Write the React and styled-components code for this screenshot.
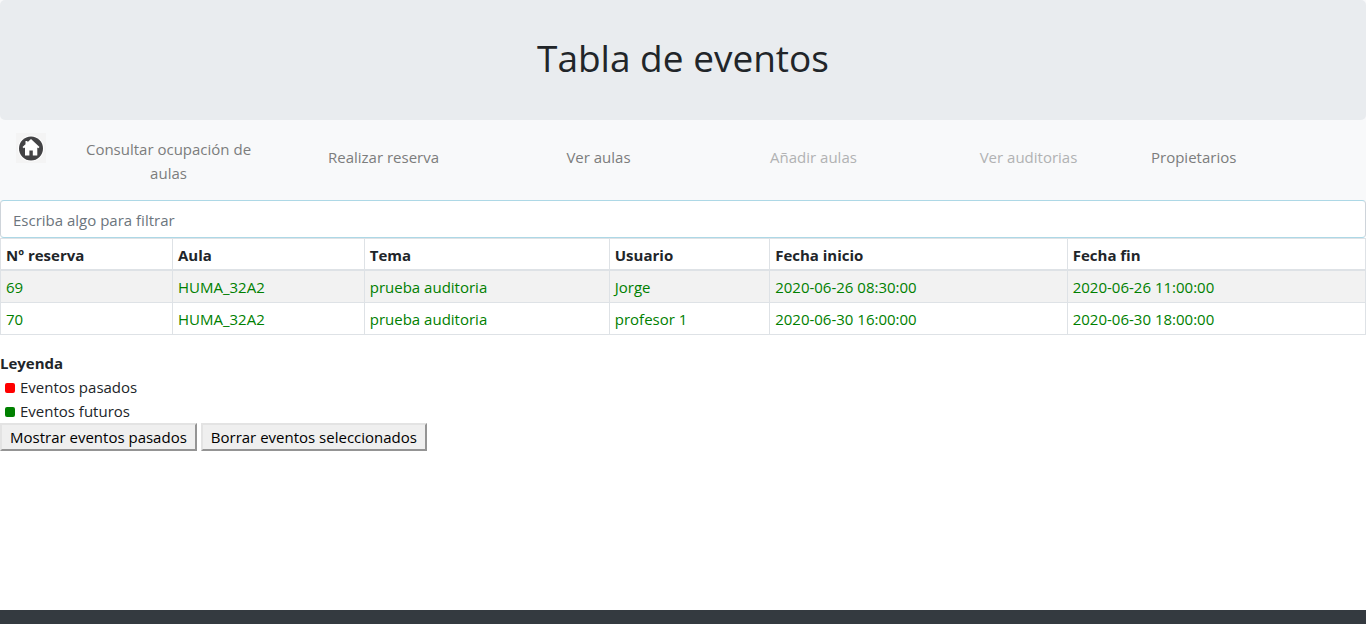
import React, { useState } from "react";
import styled, { createGlobalStyle } from "styled-components";

const GlobalStyle = createGlobalStyle`
  *, *::before, *::after { box-sizing: border-box; }
  body {
    margin: 0;
    background: #fff;
    color: #212529;
    font-family: "Segoe UI", "Open Sans", "Noto Sans", sans-serif;
    font-size: 15px;
    line-height: 24px;
  }
`;

const Page = styled.div`
  min-height: 100vh;
  display: flex;
  flex-direction: column;
`;

const Banner = styled.header`
  padding: 32px 16px;
  border-radius: 5px;
  background: #e9ecef;
  text-align: center;
`;

const BannerBackdrop = styled.div`
  background: #f8f9fa;
`;

const Title = styled.h1`
  margin: 0;
  padding-bottom: 4px;
  font-size: 37px;
  font-weight: 400;
  line-height: 52px;
`;

const Nav = styled.nav`
  display: flex;
  gap: 15px;
  min-height: 80px;
  padding: 13px 15px 13px 16px;
  background: #f8f9fa;
`;

const HomeLink = styled.a`
  flex: none;
  width: 30px;
  height: 30px;

  svg { display: block; }
`;

const Menu = styled.ul`
  flex: 1;
  display: grid;
  grid-template-columns: repeat(6, 1fr);
  align-items: start;
  margin: 0;
  padding: 4px 0 0;
  list-style: none;
`;

const MenuItem = styled.li`
  padding: ${(p) => (p.$tall ? 0 : 8)}px ${(p) => (p.$start ? 15 : 20)}px 0;
  text-align: ${(p) => (p.$start ? "left" : "center")};
`;

const MenuLink = styled.a`
  color: ${(p) => (p.$muted ? "#b1b2b3" : "#7c7d7d")};
  text-decoration: none;
`;

const Filter = styled.input`
  display: block;
  width: 100%;
  height: 38px;
  padding: 7px 12px 5px;
  border: 1px solid #ced4da;
  border-top-color: #add8e6;
  border-bottom-color: #add8e6;
  border-radius: 4px;
  background: #fff;
  color: #495057;
  font: inherit;

  &::placeholder { color: #6c757d; opacity: 1; }
`;

const FilterArea = styled.div`
  background: linear-gradient(#f8f9fa 50%, #fff 50%);
`;

const Table = styled.table`
  width: 100%;
  margin-bottom: 16px;
  border-collapse: collapse;
  table-layout: fixed;
`;

const HeadCell = styled.th`
  width: ${(p) => p.$width};
  padding: 4px 5px 2px;
  border: 1px solid #dee2e6;
  border-bottom-width: 2px;
  text-align: left;
  font-weight: 700;
`;

const Row = styled.tr`
  color: #008000;

  &:nth-child(odd) { background: #f2f2f2; }
`;

const Cell = styled.td`
  height: 32px;
  padding: 4px 5px 2px;
  border: 1px solid #dee2e6;
`;

const LegendTitle = styled.h2`
  margin: 0;
  font-size: 15px;
  font-weight: 700;
  line-height: 24px;
`;

const Legend = styled.ul`
  margin: 0;
  padding: 0 5px;
  list-style: none;
`;

const LegendItem = styled.li`
  display: flex;
  align-items: center;
  gap: 5px;

  &::before {
    content: "";
    width: 10px;
    height: 10px;
    margin-top: 2px;
    border-radius: 2px;
    background: ${(p) => p.$color};
  }
`;

const Actions = styled.div`
  display: flex;
  gap: 4px;
`;

const ActionButton = styled.button`
  padding: 0 8px;
  border: 2px solid;
  border-color: #e3e3e3 #949494 #949494 #e3e3e3;
  border-radius: 0;
  background: #efefef;
  color: #000;
  font: inherit;
`;

const Footer = styled.footer`
  height: 14px;
  margin-top: auto;
  background: #343a40;
`;

const links = [
  { label: "Consultar ocupación de aulas", tall: true },
  { label: "Realizar reserva" },
  { label: "Ver aulas" },
  { label: "Añadir aulas", muted: true },
  { label: "Ver auditorias", muted: true },
  { label: "Propietarios", start: true },
];

const columns = [
  ["Nº reserva", "12.6%"],
  ["Aula", "14.05%"],
  ["Tema", "17.95%"],
  ["Usuario", "11.75%"],
  ["Fecha inicio", "21.8%"],
  ["Fecha fin", "21.85%"],
];

const events = [
  ["69", "HUMA_32A2", "prueba auditoria", "Jorge", "2020-06-26 08:30:00", "2020-06-26 11:00:00"],
  ["70", "HUMA_32A2", "prueba auditoria", "profesor 1", "2020-06-30 16:00:00", "2020-06-30 18:00:00"],
];

function HomeIcon() {
  return (
    <svg width="30" height="30" viewBox="0 0 30 30" aria-hidden="true">
      <rect width="30" height="30" fill="#f4f4f4" />
      <circle cx="15" cy="15.5" r="13" fill="#fff" />
      <circle cx="15" cy="15.5" r="12" fill="#434345" />
      <path
        d="M15 6 L23.5 14 L22.3 15.2 L21.3 14.4 V22.5 H16.8 V17.5 H13.4 V22.5 H9 V14.4 L7.8 15.2 L6.5 14 L9.5 11.2 V8 H11.5 V9.3 Z"
        fill="#fff"
      />
    </svg>
  );
}

export default function App() {
  const [query, setQuery] = useState("");
  const visible = events.filter((row) =>
    row.join(" ").toLowerCase().includes(query.toLowerCase())
  );

  return (
    <>
      <GlobalStyle />
      <Page>
        <BannerBackdrop>
          <Banner>
            <Title>Tabla de eventos</Title>
          </Banner>
        </BannerBackdrop>
        <Nav>
          <HomeLink href="#" aria-label="Inicio">
            <HomeIcon />
          </HomeLink>
          <Menu>
            {links.map((link) => (
              <MenuItem key={link.label} $start={link.start} $tall={link.tall}>
                <MenuLink href="#" $muted={link.muted}>{link.label}</MenuLink>
              </MenuItem>
            ))}
          </Menu>
        </Nav>
        <main>
          <FilterArea>
            <Filter
              type="text"
              aria-label="Escriba algo para filtrar"
              placeholder="Escriba algo para filtrar"
              value={query}
              onChange={(e) => setQuery(e.target.value)}
            />
          </FilterArea>
          <Table>
            <thead>
              <tr>
                {columns.map(([label, width]) => (
                  <HeadCell key={label} scope="col" $width={width}>{label}</HeadCell>
                ))}
              </tr>
            </thead>
            <tbody>
              {visible.map((row) => (
                <Row key={row[0]}>
                  {row.map((value, i) => <Cell key={columns[i][0]}>{value}</Cell>)}
                </Row>
              ))}
            </tbody>
          </Table>
          <LegendTitle>Leyenda</LegendTitle>
          <Legend>
            <LegendItem $color="#ff0000">Eventos pasados</LegendItem>
            <LegendItem $color="#008000">Eventos futuros</LegendItem>
          </Legend>
          <Actions>
            <ActionButton type="button">Mostrar eventos pasados</ActionButton>
            <ActionButton type="button">Borrar eventos seleccionados</ActionButton>
          </Actions>
        </main>
        <Footer />
      </Page>
    </>
  );
}
